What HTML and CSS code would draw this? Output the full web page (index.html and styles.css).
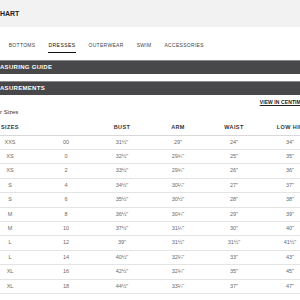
FILE: index.html
```html
<!DOCTYPE html>
<html>
<head>
<meta charset="utf-8">
<link rel="stylesheet" href="styles.css">
</head>
<body>
<div class="page">
  <div class="title-band"><h1 class="title">SIZE CHART</h1></div>
  <nav class="nav">
    <span class="nav-item">TOPS</span>
    <span class="nav-item">BOTTOMS</span>
    <span class="nav-item active">DRESSES</span>
    <span class="nav-item">OUTERWEAR</span>
    <span class="nav-item">SWIM</span>
    <span class="nav-item">ACCESSORIES</span>
  </nav>
  <div class="bar bar-first">MEASURING GUIDE</div>
  <div class="bar">MEASUREMENTS</div>
  <div class="link-row"><a class="unit-link">VIEW IN CENTIMETERS</a></div>
  <div class="subhead">Our Sizes</div>
  <table class="chart">
    <thead>
      <tr><th>SIZES</th><th></th><th>BUST</th><th>ARM</th><th>WAIST</th><th>LOW HIP</th></tr>
    </thead>
    <tbody>
      <tr><td>XXS</td><td>00</td><td>31½"</td><td>29"</td><td>24"</td><td>34"</td></tr>
      <tr><td>XS</td><td>0</td><td>32½"</td><td>29¾"</td><td>25"</td><td>35"</td></tr>
      <tr><td>XS</td><td>2</td><td>33½"</td><td>29¾"</td><td>26"</td><td>36"</td></tr>
      <tr><td>S</td><td>4</td><td>34½"</td><td>30¼"</td><td>27"</td><td>37"</td></tr>
      <tr><td>S</td><td>6</td><td>35½"</td><td>30½"</td><td>28"</td><td>38"</td></tr>
      <tr><td>M</td><td>8</td><td>36½"</td><td>30¾"</td><td>29"</td><td>39"</td></tr>
      <tr><td>M</td><td>10</td><td>37½"</td><td>31¼"</td><td>30"</td><td>40"</td></tr>
      <tr><td>L</td><td>12</td><td>39"</td><td>31½"</td><td>31½"</td><td>41½"</td></tr>
      <tr><td>L</td><td>14</td><td>40½"</td><td>32¼"</td><td>33"</td><td>43"</td></tr>
      <tr><td>XL</td><td>16</td><td>42½"</td><td>32¾"</td><td>35"</td><td>45"</td></tr>
      <tr><td>XL</td><td>18</td><td>44½"</td><td>33¼"</td><td>37"</td><td>47"</td></tr>
    </tbody>
  </table>
</div>
</body>
</html>
```
FILE: styles.css
```css
html, body {
  margin: 0;
  padding: 0;
  background: #fff;
  overflow: hidden;
}
body {
  font-family: "Liberation Sans", Arial, sans-serif;
  color: #333;
}
.page {
  width: 360px;
  margin-left: -30px;
}
.title-band {
  height: 27px;
  background: #f2f2f2;
  display: flex;
  align-items: center;
  padding-left: 7.4px;
}
.title {
  margin: 0;
  font-size: 7px;
  font-weight: bold;
  color: #222;
  line-height: 10px;
}
.nav {
  display: flex;
  gap: 13px;
  padding: 13px 0 0 11px;
  align-items: flex-start;
}
.nav-item {
  font-size: 5px;
  letter-spacing: 0.3px;
  line-height: 10px;
  color: #444;
  padding-bottom: 2px;
  border-bottom: 1.5px solid transparent;
}
.nav-item.active {
  color: #111;
  border-bottom-color: #111;
  letter-spacing: 0.45px;
}
.bar {
  height: 14.5px;
  background: #48484b;
  border-top: 1px solid #8a8a8c;
  box-sizing: border-box;
  color: #fff;
  font-size: 6px;
  font-weight: bold;
  letter-spacing: 0.3px;
  line-height: 13px;
  padding-left: 20.4px;
  margin-top: 6.5px;
}
.link-row {
  display: flex;
  justify-content: flex-end;
  padding-right: 12px;
  margin-top: 4px;
  line-height: 7px;
}
.unit-link {
  font-size: 5px;
  font-weight: bold;
  color: #222;
  text-decoration: underline;
  letter-spacing: 0.1px;
}
.subhead {
  font-size: 6px;
  line-height: 8px;
  margin-top: 1.5px;
  padding-left: 22px;
  color: #333;
}
.chart {
  margin-left: 12px;
  border-collapse: collapse;
  table-layout: fixed;
  width: 336px;
}
.chart th, .chart td {
  width: 56px;
  padding: 0;
  text-align: center;
}
.chart th {
  font-size: 5.5px;
  font-weight: bold;
  letter-spacing: 0.4px;
  color: #333;
  line-height: 14px;
  padding-top: 4px;
  padding-bottom: 1px;
  border-bottom: 1px solid #d8d8d8;
}
.chart td {
  font-size: 5.5px;
  color: #6a6a6a;
  height: 13.4px;
  line-height: 13.4px;
  border-bottom: 1px solid #e4e4e4;
}
```
